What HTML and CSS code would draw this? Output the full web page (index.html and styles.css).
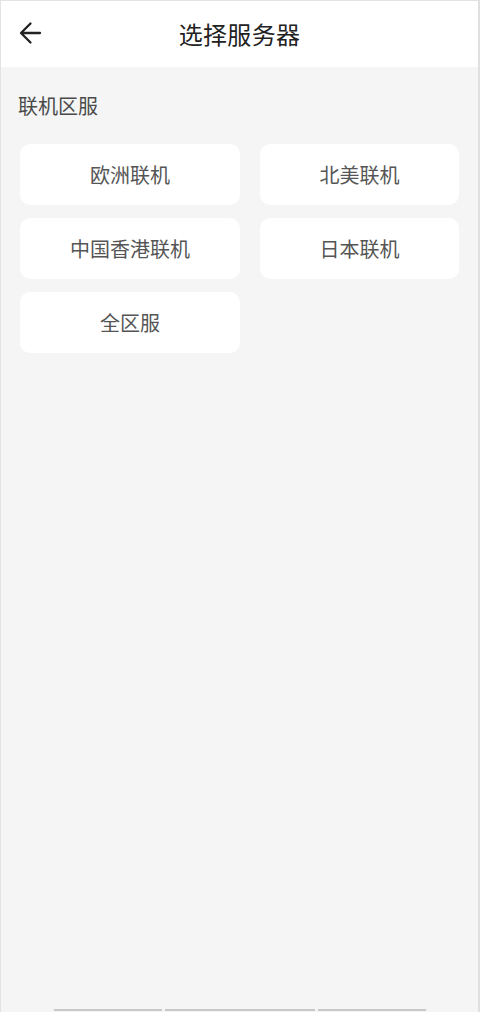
FILE: index.html
```html
<!DOCTYPE html>
<html lang="zh">
<head>
<meta charset="utf-8">
<title>选择服务器</title>
<link rel="stylesheet" href="styles.css">
</head>
<body>
<div class="screen">
  <header class="topbar">
    <button class="back" aria-label="返回">
      <svg width="24" height="24" viewBox="0 0 24 24" fill="none" stroke="#222" stroke-width="2.3" stroke-linecap="round" stroke-linejoin="round">
        <path d="M21 12H2.5M11.5 2.5L2 12l9.5 9.5"/>
      </svg>
    </button>
    <h1 class="title">选择服务器</h1>
  </header>
  <main class="content">
    <div class="label">联机区服</div>
    <div class="grid">
      <div class="card">欧洲联机</div>
      <div class="card">北美联机</div>
      <div class="card">中国香港联机</div>
      <div class="card">日本联机</div>
      <div class="card">全区服</div>
    </div>
  </main>
  <div class="navbar">
    <span class="nav-line l1"></span>
    <span class="nav-line l2"></span>
    <span class="nav-line l3"></span>
  </div>
</div>
</body>
</html>
```
FILE: styles.css
```css
* { box-sizing: border-box; }
html, body { margin: 0; padding: 0; }
body {
  font-family: "Noto Sans CJK SC", "Noto Sans", sans-serif;
  background: #f5f5f5;
}
.screen {
  width: 480px;
  height: 1012px;
  border-top: 1px solid #e3e3e3;
  border-left: 1px solid #e3e3e3;
  border-right: 2px solid #e0e0e0;
  background: #f5f5f5;
  display: flex;
  flex-direction: column;
}
.topbar {
  height: 66px;
  background: #fff;
  position: relative;
  display: flex;
  align-items: center;
  justify-content: center;
  flex-shrink: 0;
}
.back {
  position: absolute;
  left: 18px;
  top: 20px;
  width: 24px;
  height: 24px;
  padding: 0;
  border: 0;
  background: none;
  display: flex;
}
.title {
  margin: 0;
  font-size: 24px;
  font-weight: 400;
  color: #222;
  line-height: 1;
  letter-spacing: 0.3px;
}
.content {
  flex: 1;
  padding: 25px 0 0 19px;
}
.label {
  font-size: 20px;
  line-height: 28px;
  color: #4a4a4a;
  padding-left: -2px;
  margin-left: -2px;
}
.grid {
  margin-top: 24px;
  display: grid;
  grid-template-columns: 220px 199px;
  column-gap: 20px;
  row-gap: 13px;
}
.card {
  height: 61px;
  background: #fff;
  border-radius: 10px;
  display: flex;
  align-items: center;
  justify-content: center;
  font-size: 20px;
  color: #555;
}
.navbar {
  height: 3px;
  display: flex;
  align-items: flex-start;
  padding-left: 53px;
  gap: 3px;
}
.nav-line {
  display: block;
  height: 1.5px;
  background: #c8c8c8;
}
.l1 { width: 108px; }
.l2 { width: 150px; }
.l3 { width: 108px; }
```
